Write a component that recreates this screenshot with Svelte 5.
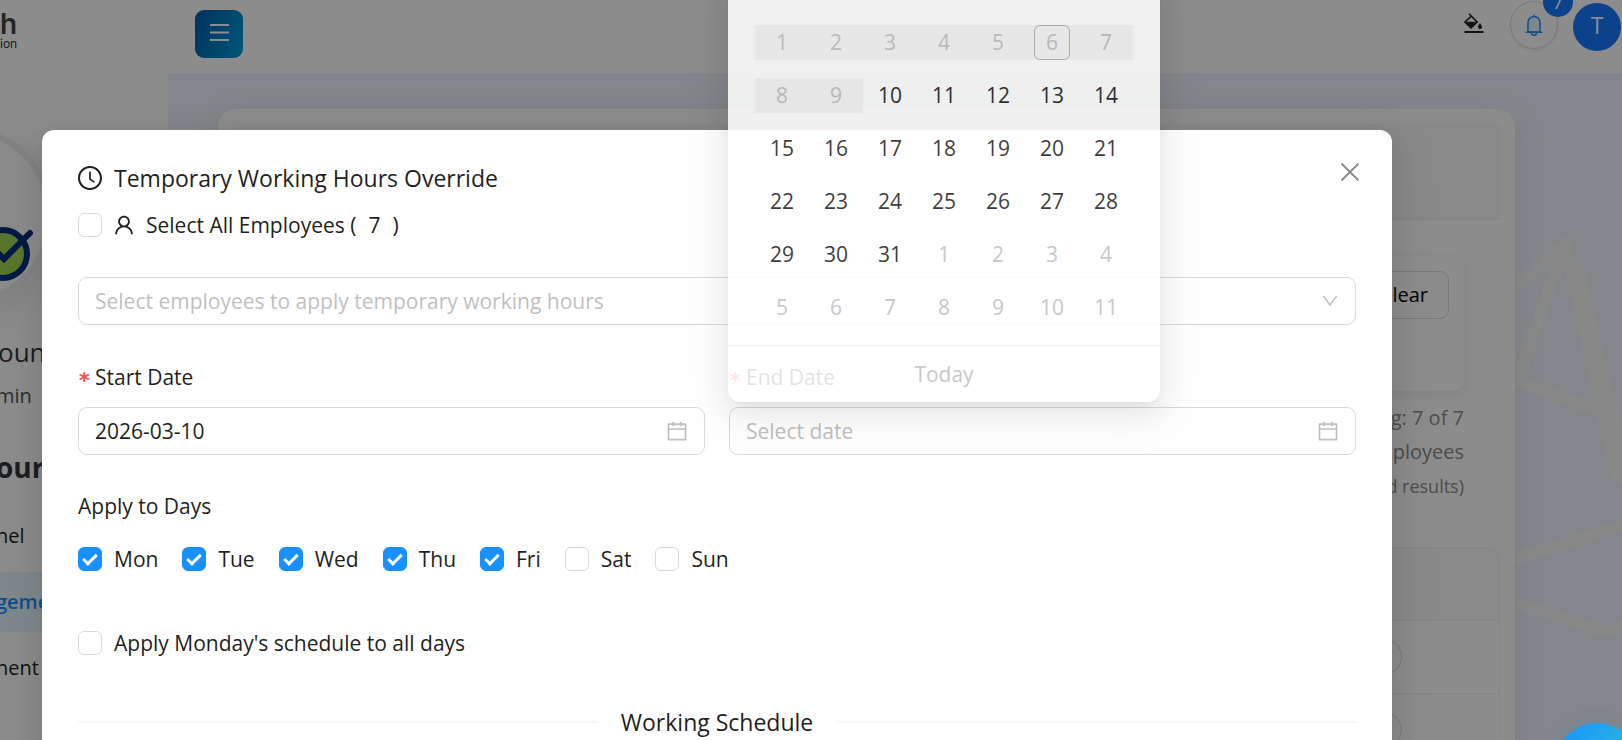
<script>
  let selectAll = $state(false);
  let sameSchedule = $state(false);
  let startDate = $state('2026-03-10');
  let endDate = $state('');

  let days = $state([
    { label: 'Mon', checked: true },
    { label: 'Tue', checked: true },
    { label: 'Wed', checked: true },
    { label: 'Thu', checked: true },
    { label: 'Fri', checked: true },
    { label: 'Sat', checked: false },
    { label: 'Sun', checked: false }
  ]);

  const today = 6;
  const firstEnabled = 10;
  const daysInMonth = 31;

  // six weeks, running over into the next month
  const weeks = Array.from({ length: 6 }, (_, w) =>
    Array.from({ length: 7 }, (_, d) => {
      const n = w * 7 + d + 1;
      const outside = n > daysInMonth;
      return {
        n: outside ? n - daysInMonth : n,
        outside,
        disabled: n < firstEnabled,
        today: n === today
      };
    })
  );

  function pick(cell) {
    const month = cell.outside ? '04' : '03';
    endDate = `2026-${month}-${String(cell.n).padStart(2, '0')}`;
  }
</script>

{#snippet calendarIcon()}
  <svg class="field-icon" viewBox="0 0 1024 1024" width="24" height="24" fill="currentColor" aria-hidden="true">
    <path d="M880 184H712v-64c0-4.4-3.6-8-8-8h-56c-4.4 0-8 3.6-8 8v64H384v-64c0-4.4-3.6-8-8-8h-56c-4.4 0-8 3.6-8 8v64H144c-17.7 0-32 14.3-32 32v664c0 17.7 14.3 32 32 32h736c17.7 0 32-14.3 32-32V216c0-17.7-14.3-32-32-32zm-40 656H184V460h656v380zM184 392V256h128v48c0 4.4 3.6 8 8 8h56c4.4 0 8-3.6 8-8v-48h256v48c0 4.4 3.6 8 8 8h56c4.4 0 8-3.6 8-8v-48h128v136H184z" />
  </svg>
{/snippet}

<div class="page">
  <header class="topbar">
    <div class="brand">
      <span class="brand-name">h</span>
      <span class="brand-sub">ion</span>
    </div>
    <button class="menu-btn" type="button" aria-label="Toggle menu">
      <svg viewBox="0 0 19 17" width="19" height="17" aria-hidden="true">
        <path d="M0 1h19M0 8.500h19M0 16h19" stroke="#fff" stroke-width="2" />
      </svg>
    </button>
    <div class="actions">
      <button class="fill-btn" type="button" aria-label="Theme colour">
        <svg viewBox="0 0 20 20" width="20" height="20" aria-hidden="true">
          <path d="M5 .800l8.200 8.200-6.200 5.800L1 9l6.400-6" fill="none" stroke="#222" stroke-width="1.600" />
          <path d="M1.200 8.800h11.800l-6 6zM16 10s-2 2.600-2 3.900a2 2 0 0 0 4 0c0-1.300-2-3.900-2-3.900zM.500 18h19v2H.500z" fill="#222" />
        </svg>
      </button>
      <button class="bell-btn" type="button" aria-label="Notifications">
        <svg viewBox="0 0 18 22" width="18" height="22" aria-hidden="true">
          <path d="M3 18V8.500a6 6 0 0 1 12 0V18z" fill="#e6f7ff" stroke="#1890ff" stroke-width="1.500" />
          <path d="M.500 18.300h17M9 2.500V.500M6.500 19a2.500 2.200 0 0 0 5 0" fill="none" stroke="#1890ff" stroke-width="1.500" />
        </svg>
        <span class="badge">7</span>
      </button>
      <button class="avatar" type="button">T</button>
    </div>
  </header>

  <div class="shell">
    <aside class="sidebar">
      <div class="photo">
        <svg viewBox="0 0 76 60" width="76" height="60" aria-hidden="true">
          <circle cx="44" cy="31" r="24" fill="#a4d650" stroke="#002f80" stroke-width="6" />
          <path d="M31 22l14 14L71 10" fill="none" stroke="#002f80" stroke-width="6" stroke-linecap="round" />
        </svg>
      </div>
      <div class="account">oun</div>
      <div class="role">min</div>
      <div class="section">ourc</div>
      <nav>
        <a href="#panel">nel</a>
        <a href="#management" class="active">geme</a>
        <a href="#department">nent</a>
      </nav>
    </aside>

    <main>
      <svg class="pattern" viewBox="0 0 107 420" width="107" height="420" aria-hidden="true">
        <g fill="none" stroke="#f7f8f9" stroke-width="12">
          <path d="M0 62L50 18 103 258" />
          <path d="M50 18L2 156 96 190" />
          <path d="M62 40L110 240" />
          <path d="M0 334L110 300" />
          <path d="M0 378L80 403Q92 407 110 400" />
        </g>
      </svg>
      <section class="card">
        <div class="card-head"></div>
        <div class="filters">
          <button type="button" class="clear-btn">Clear</button>
        </div>
        <div class="summary">
          <div>g: 7 of 7</div>
          <div>ployees</div>
          <div class="small">d results)</div>
        </div>
        <div class="table-wrap">
          <table>
            <thead><tr><th></th></tr></thead>
            <tbody>
              {#each [1, 2] as row}
                <tr><td><button type="button" class="pill" aria-label="Row {row} actions"></button></td></tr>
              {/each}
            </tbody>
          </table>
        </div>
      </section>
    </main>
  </div>

  <div class="mask">
    <div class="modal" role="dialog" aria-labelledby="modal-title">
      <button class="close" type="button" aria-label="Close">
        <svg viewBox="0 0 18 18" width="18" height="18" aria-hidden="true">
          <path d="M.500 .500l17 17M17.500 .500l-17 17" stroke="#8c8c8c" stroke-width="2" />
        </svg>
      </button>

      <h2 id="modal-title">
        <svg viewBox="64 64 896 896" width="24" height="24" fill="currentColor" aria-hidden="true">
          <path d="M512 64C264.600 64 64 264.600 64 512s200.600 448 448 448 448-200.600 448-448S759.400 64 512 64zm0 820c-205.400 0-372-166.600-372-372s166.600-372 372-372 372 166.600 372 372-166.600 372-372 372z" />
          <path d="M686.700 638.600L544.100 535.500V288c0-4.400-3.600-8-8-8H488c-4.400 0-8 3.600-8 8v275.400c0 2.600 1.200 5 3.300 6.500l165.400 120.600c3.600 2.600 8.600 1.800 11.200-1.700l28.600-39c2.600-3.700 1.800-8.700-1.800-11.200z" />
        </svg>
        Temporary Working Hours Override
      </h2>

      <label class="check all">
        <input type="checkbox" bind:checked={selectAll} />
        <svg viewBox="0 0 1024 1024" width="24" height="24" fill="currentColor" aria-hidden="true">
          <path d="M858.500 763.600a374 374 0 00-80.600-119.500 375.630 375.630 0 00-119.500-80.600c-.4-.2-.8-.3-1.200-.5C719.500 518 760 444.700 760 362c0-137-111-248-248-248S264 225 264 362c0 82.700 40.500 156 102.800 201.100-.4.2-.8.3-1.200.5-44.800 18.900-85 46-119.500 80.600a375.630 375.630 0 00-80.600 119.500A371.700 371.700 0 00136 901.800a8 8 0 008 8.200h60c4.400 0 7.900-3.500 8-7.800 2-77.200 33-149.500 87.800-204.300 56.700-56.700 132-87.900 212.200-87.900s155.500 31.200 212.200 87.900C779 752.700 810 825 812 902.200c.1 4.400 3.600 7.800 8 7.800h60a8 8 0 008-8.200c-1-47.800-10.900-94.300-29.500-138.200zM512 534c-45.900 0-89.100-17.900-121.600-50.400S340 407.900 340 362c0-45.900 17.900-89.100 50.400-121.600S466.100 190 512 190s89.100 17.900 121.600 50.400S684 316.100 684 362c0 45.900-17.900 89.100-50.400 121.600S557.900 534 512 534z" />
        </svg>
        <span class="all-text"><span>Select All Employees (</span><span>7</span><span>)</span></span>
      </label>

      <div class="control employees">
        <select aria-label="Employees">
          <option value="">Select employees to apply temporary working hours</option>
        </select>
        <svg class="field-icon" viewBox="0 0 1024 1024" width="20" height="20" fill="currentColor" aria-hidden="true">
          <path d="M884 256h-75c-5.100 0-9.900 2.500-12.900 6.600L512 654.200 227.900 262.600c-3-4.100-7.800-6.600-12.900-6.600h-75c-6.500 0-10.300 7.400-6.500 12.700l352.600 486.100c12.800 17.600 39 17.600 51.700 0l352.600-486.100c3.900-5.300.1-12.700-6.400-12.700z" />
        </svg>
      </div>

      <div class="dates">
        <div class="field">
          <label for="start-date"><span class="required">*</span>Start Date</label>
          <div class="control">
            <input id="start-date" type="text" placeholder="Select date" bind:value={startDate} />
            {@render calendarIcon()}
          </div>
        </div>
        <div class="field">
          <label for="end-date"><span class="required">*</span>End Date</label>
          <div class="control">
            <input id="end-date" type="text" placeholder="Select date" bind:value={endDate} />
            {@render calendarIcon()}

            <div class="picker">
              <table class="calendar">
                <tbody>
                  {#each weeks as week}
                    <tr>
                      {#each week as cell}
                        <td>
                          <button
                            type="button"
                            class="day"
                            class:outside={cell.outside}
                            class:today={cell.today}
                            disabled={cell.disabled}
                            onclick={() => pick(cell)}
                          ><span>{cell.n}</span></button>
                        </td>
                      {/each}
                    </tr>
                  {/each}
                </tbody>
              </table>
              <div class="picker-footer">
                <button type="button" disabled>Today</button>
              </div>
            </div>
          </div>
        </div>
      </div>

      <fieldset class="days">
        <legend>Apply to Days</legend>
        <div class="days-row">
          {#each days as day}
            <label class="check">
              <input type="checkbox" bind:checked={day.checked} />
              <span>{day.label}</span>
            </label>
          {/each}
        </div>
      </fieldset>

      <label class="check same">
        <input type="checkbox" bind:checked={sameSchedule} />
        <span>Apply Monday's schedule to all days</span>
      </label>

      <h3 class="divider">Working Schedule</h3>
    </div>
  </div>

  <button class="float-btn" type="button" aria-label="Help"></button>
</div>

<style>
  :global(body) {
    margin: 0;
  }

  .page {
    position: relative;
    height: 100vh;
    overflow: hidden;
    display: flex;
    flex-direction: column;
    background: #fff;
    color: #1f1f1f;
    font-family: 'Open Sans', 'Noto Sans', sans-serif;
    font-size: 20px;
    line-height: 32px;
  }

  .page *,
  .page *::after {
    box-sizing: border-box;
  }

  button,
  input,
  select {
    font: inherit;
    color: inherit;
  }

  button {
    padding: 0;
    border: none;
    background: none;
    cursor: pointer;
  }

  /* top bar */
  .topbar {
    display: flex;
    flex: none;
    height: 73px;
    background: #fff;
  }

  .brand {
    width: 195px;
    padding-top: 10px;
    display: flex;
    flex-direction: column;
  }

  .brand-name {
    font-family: Inter, sans-serif;
    font-size: 28px;
    line-height: 28px;
    font-weight: 600;
    color: #444;
  }

  .brand-sub {
    font-family: Inter, sans-serif;
    font-size: 12px;
    line-height: 12px;
    color: #333;
  }

  .menu-btn {
    width: 48px;
    height: 48px;
    margin-top: 10px;
    display: flex;
    align-items: center;
    justify-content: center;
    border-radius: 9px;
    background: linear-gradient(110deg, #005ba8, #00a0dc);
  }

  .menu-btn svg {
    margin-bottom: 4px;
  }

  .actions {
    flex: 1;
    display: flex;
    justify-content: flex-end;
    align-items: flex-start;
    padding-right: 1px;
  }

  .fill-btn {
    margin: 13px 26px 0 0;
    display: flex;
  }

  .bell-btn {
    position: relative;
    width: 48px;
    height: 48px;
    margin: 1px 15px 0 0;
    display: flex;
    align-items: center;
    justify-content: center;
    border: 1px solid #d9d9d9;
    border-radius: 50%;
    box-shadow: 0 2px 3px rgba(0, 0, 0, 0.06);
  }

  .badge {
    position: absolute;
    top: -15px;
    right: -16px;
    width: 30px;
    height: 30px;
    border-radius: 50%;
    background: #1677ff;
    color: #fff;
    line-height: 30px;
  }

  .avatar {
    width: 48px;
    height: 48px;
    margin-top: 3px;
    padding-bottom: 4px;
    border-radius: 50%;
    background: #1677ff;
    color: #fff;
    font-size: 23px;
    line-height: 44px;
  }

  /* page body behind the dialog */
  .shell {
    flex: 1;
    display: flex;
    min-height: 0;
  }

  .sidebar {
    flex: none;
    width: 168px;
    padding-top: 53px;
    white-space: nowrap;
  }

  .photo {
    display: flex;
    align-items: center;
    justify-content: flex-end;
    width: 180px;
    height: 180px;
    margin-left: -127px;
    padding: 74px 12px 0 0;
    border: 6px solid #ededed;
    border-radius: 50%;
    background: #fdfdfd;
    box-shadow: 0 12px 36px rgba(0, 0, 0, 0.1);
  }

  .account {
    margin: 30px 0 0 -2px;
    font-size: 26px;
    color: #33373d;
  }

  .role {
    margin-top: 12px;
    margin-left: -4px;
    color: #555;
  }

  .section {
    margin: 39px 0 0 -4px;
    font-size: 28px;
    font-weight: 700;
    color: #33373d;
  }

  nav {
    display: flex;
    flex-direction: column;
    gap: 6px;
    margin-top: 23px;
  }

  nav a {
    height: 60px;
    margin-left: -4px;
    line-height: 60px;
    color: #1f1f1f;
    text-decoration: none;
  }

  nav a.active {
    background: #e6f7ff;
    color: #1890ff;
    font-weight: 600;
  }

  main {
    position: relative;
    flex: 1;
    min-width: 0;
    padding: 36px 107px 0 50px;
    background: #eff4fb;
  }

  .pattern {
    position: absolute;
    top: 152px;
    right: 0;
  }

  .card {
    position: relative;
    height: 800px;
    padding: 15px;
    border-radius: 18px;
    background: #fff;
    box-shadow: 0 6px 36px rgba(0, 21, 41, 0.08);
  }

  .card-head {
    height: 96px;
    background: #fafafa;
    border-bottom: 2px solid #f0f0f0;
  }

  .filters {
    display: flex;
    justify-content: flex-end;
    height: 135px;
    margin: 36px 36px 0;
    padding: 15px;
    border-radius: 12px;
    box-shadow: 0 3px 12px rgba(0, 0, 0, 0.08);
  }

  .clear-btn {
    height: 48px;
    padding: 0 20px;
    border: 1px solid #d9d9d9;
    border-radius: 9px;
    color: #000;
  }

  .summary {
    margin: 10px 36px 44px;
    text-align: right;
    line-height: 34px;
    color: #8c8c8c;
  }

  .summary .small {
    font-size: 18px;
  }

  .table-wrap {
    border: 1px solid #f0f0f0;
    border-radius: 12px;
    overflow: hidden;
  }

  .table-wrap table {
    width: 100%;
    border-collapse: collapse;
  }

  .table-wrap th {
    height: 72px;
    padding: 0;
    background: #fafafa;
    border-bottom: 1px solid #f0f0f0;
  }

  .table-wrap td {
    height: 73px;
    padding: 0 97px 0 0;
    text-align: right;
    border-bottom: 1px solid #f0f0f0;
  }

  .pill {
    width: 48px;
    height: 36px;
    border: 1px solid #d9d9d9;
    border-radius: 18px;
    vertical-align: middle;
  }

  /* dialog */
  .mask {
    position: absolute;
    inset: 0;
    padding: 130px 230px 0 42px;
    background: rgba(0, 0, 0, 0.45);
  }

  .modal {
    position: relative;
    padding: 30px 36px;
    border-radius: 12px;
    background: #fff;
    font-size: 21px;
    box-shadow:
      0 9px 24px rgba(0, 0, 0, 0.08),
      0 4px 9px -6px rgba(0, 0, 0, 0.12),
      0 14px 42px 12px rgba(0, 0, 0, 0.05);
  }

  .close {
    position: absolute;
    top: 24px;
    right: 24px;
    width: 36px;
    height: 36px;
    display: flex;
    align-items: center;
    justify-content: center;
  }

  h2,
  h3 {
    margin: 0;
    font-size: 23px;
    line-height: 36px;
    font-weight: 400;
  }

  h2 {
    display: flex;
    align-items: center;
    gap: 12px;
  }

  .check {
    display: flex;
    align-items: center;
    gap: 12px;
    cursor: pointer;
  }

  .check input {
    appearance: none;
    flex: none;
    width: 24px;
    height: 24px;
    margin: 0;
    border: 1px solid #d9d9d9;
    border-radius: 6px;
    background: #fff;
    display: flex;
    justify-content: center;
  }

  .check input:checked {
    border-color: #1890ff;
    background: #1890ff;
  }

  .check input:checked::after {
    content: '';
    width: 8px;
    height: 14px;
    margin-top: 3px;
    border: solid #fff;
    border-width: 0 3px 3px 0;
    transform: rotate(45deg);
  }

  .all {
    margin: 13px 0 36px;
    gap: 10px;
  }

  .all-text {
    display: flex;
    gap: 12px;
  }

  .control {
    position: relative;
    display: flex;
    align-items: center;
    height: 48px;
    padding-right: 15px;
    border: 1px solid #d9d9d9;
    border-radius: 9px;
  }

  .control > input,
  .control select {
    appearance: none;
    flex: 1;
    min-width: 0;
    height: 100%;
    padding: 0 16px;
    border: none;
    outline: none;
    background: none;
  }

  .control select,
  .control > input::placeholder {
    color: #bfbfbf;
    opacity: 1;
  }

  .field-icon {
    flex: none;
    color: #bfbfbf;
  }

  .dates {
    display: grid;
    grid-template-columns: 1fr 1fr;
    gap: 24px;
    margin-top: 36px;
  }

  .field label {
    display: flex;
    height: 32px;
    margin-bottom: 14px;
  }

  .required {
    width: 17px;
    color: #ff4d4f;
    font-family: 'DejaVu Sans Mono', monospace;
    font-weight: 700;
    line-height: 40px;
  }

  /* date popup, opens above the field */
  .picker {
    position: absolute;
    left: -2px;
    bottom: calc(100% + 6px);
    width: 432px;
    padding-top: 40px;
    border-radius: 12px;
    background: #fff;
    opacity: 0.87;
    box-shadow:
      0 9px 24px rgba(0, 0, 0, 0.08),
      0 4px 9px -6px rgba(0, 0, 0, 0.12),
      0 14px 42px 12px rgba(0, 0, 0, 0.05);
  }

  .calendar {
    width: 378px;
    margin: 0 27px 11px;
    border-collapse: collapse;
    table-layout: fixed;
  }

  .calendar td {
    height: 53px;
    padding: 0;
  }

  .day {
    display: flex;
    justify-content: center;
    width: 100%;
    height: 35px;
    line-height: 35px;
  }

  .day span {
    width: 36px;
    text-align: center;
  }

  .day.outside,
  .day:disabled {
    color: #bfbfbf;
  }

  .day:disabled {
    background: rgba(0, 0, 0, 0.04);
    cursor: not-allowed;
  }

  .day.today span {
    border: 1px solid #b0b0b0;
    border-radius: 6px;
    line-height: 33px;
  }

  .picker-footer {
    display: flex;
    justify-content: center;
    height: 57px;
    border-top: 1px solid #f0f0f0;
  }

  .picker-footer button {
    color: #bfbfbf;
  }

  .days {
    margin: 35px 0 0;
    padding: 0;
    border: none;
  }

  .days legend {
    padding: 0;
    margin-bottom: 21px;
  }

  .days-row {
    display: flex;
    gap: 24px;
  }

  .same {
    margin: 52px 0 45px;
  }

  .divider {
    display: flex;
    align-items: center;
    gap: 24px;
  }

  .divider::before,
  .divider::after {
    content: '';
    flex: 1;
    height: 2px;
    background: #f7f7f7;
  }

  .float-btn {
    position: absolute;
    right: -17px;
    bottom: -67px;
    width: 84px;
    height: 84px;
    border-radius: 50%;
    background: linear-gradient(135deg, #1890ff, #36cfc9);
    box-shadow: 0 6px 24px rgba(24, 144, 255, 0.2);
  }
</style>
